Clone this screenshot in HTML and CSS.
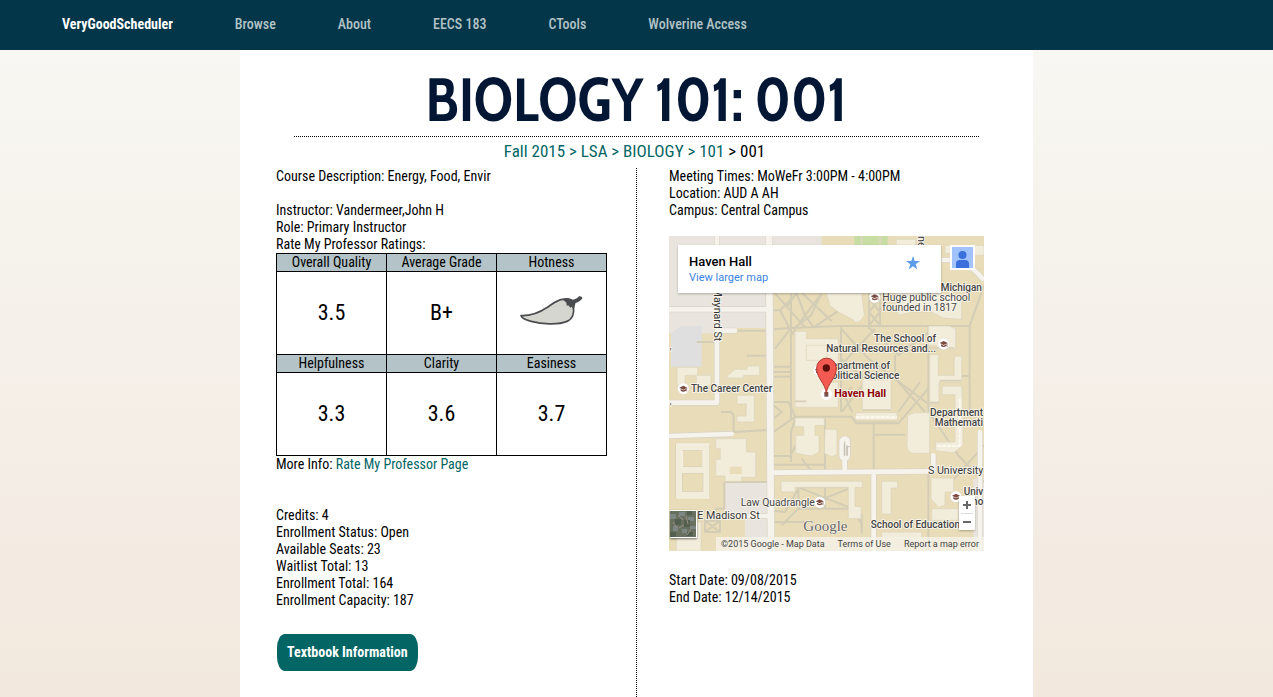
FILE: index.html
```html
<!DOCTYPE html>
<html lang="en">
<head>
<meta charset="utf-8">
<meta name="viewport" content="width=device-width, initial-scale=1">
<title>BIOLOGY 101: 001 - VeryGoodScheduler</title>
<link rel="stylesheet" href="styles.css">
</head>
<body>
<nav class="navbar">
  <a class="brand" href="#">VeryGoodScheduler</a>
  <a href="#">Browse</a>
  <a href="#">About</a>
  <a href="#">EECS 183</a>
  <a href="#">CTools</a>
  <a href="#">Wolverine Access</a>
</nav>

<main class="page">
  <h1 class="title">BIOLOGY 101: 001</h1>
  <div class="crumbs"><a href="#">Fall 2015 &gt;</a> <a href="#">LSA &gt;</a> <a href="#">BIOLOGY &gt;</a> <a href="#">101</a> &gt; 001</div>

  <div class="columns">
    <section class="details">
      <p>Course Description: Energy, Food, Envir</p>
      <div class="instructor">
        <p>Instructor: Vandermeer,John H</p>
        <p>Role: Primary Instructor</p>
        <p>Rate My Professor Ratings:</p>
        <table class="ratings">
          <tr><th>Overall Quality</th><th>Average Grade</th><th>Hotness</th></tr>
          <tr>
            <td>3.5</td>
            <td>B+</td>
            <td>
              <svg class="chili" viewBox="30 30 195 92" role="img" aria-label="Chili pepper">
                <path d="M36 91C62 92 90 82 114 66C132 54 146 42 162 43C176 43 187 51 190 64C195 83 188 101 172 108C146 119 96 116 66 108C48 103 37 98 36 91Z" fill="#d5d6cf" stroke="#4b4c4f" stroke-width="5" stroke-linejoin="round"/>
                <path d="M158 42C168 37 180 39 189 44C197 43 203 39 207 34C212 33 218 35 217 40C212 46 206 51 197 54C195 62 194 69 192 76L187 65L181 68L177 61L171 61L170 53Z" fill="#4b4c4f"/>
              </svg>
            </td>
          </tr>
          <tr><th>Helpfulness</th><th>Clarity</th><th>Easiness</th></tr>
          <tr><td>3.3</td><td>3.6</td><td>3.7</td></tr>
        </table>
        <p>More Info: <a href="#">Rate My Professor Page</a></p>
      </div>
      <div class="enrollment">
        <p>Credits: 4</p>
        <p>Enrollment Status: Open</p>
        <p>Available Seats: 23</p>
        <p>Waitlist Total: 13</p>
        <p>Enrollment Total: 164</p>
        <p>Enrollment Capacity: 187</p>
      </div>
      <button class="textbooks" type="button">Textbook Information</button>
    </section>

    <section class="meeting">
      <p>Meeting Times: MoWeFr 3:00PM - 4:00PM</p>
      <p>Location: AUD A AH</p>
      <p>Campus: Central Campus</p>

      <div class="map">
        <svg class="map-art" viewBox="12 12 945 945" role="img" aria-label="Map of Haven Hall">
          <defs>
            <g id="school">
              <circle r="17" fill="#fff" stroke="#d9d4c6" stroke-width="1"/>
              <path d="M-12-3L0-9L12-3L0 3Z" fill="#7b4a40"/>
              <path d="M-8 1V6Q0 12 8 6V1L0 5Z" fill="#7b4a40"/>
              <path d="M10-2V8" stroke="#7b4a40" stroke-width="2"/>
            </g>
          </defs>
          <rect x="12" y="12" width="945" height="945" fill="#e8dcb9"/>

          <!-- paved and park blocks -->
          <g fill="#e9e4dd">
            <path d="M12 12H148V226H12ZM164 12H302V226H164ZM12 240H148V304H12ZM164 240H302V288H164ZM324 12H470V40H324Z"/>
            <path d="M178 750H310V845H178ZM240 860H310V957H240ZM925 740H957V957H925Z"/>
          </g>
          <path d="M18 304L50 282H110V404H18Z" fill="#dfdfe0"/>
          <path d="M568 12H668V40H568Z" fill="#c7dda4"/>
          <path d="M590 12V40M646 12V40" stroke="#d9d8bd" stroke-width="6"/>

          <!-- walkways -->
          <g fill="none" stroke="#d4cdb6" stroke-width="6" stroke-linejoin="round">
            <path d="M325 292L378 288L520 282H914M378 184V560M378 288L330 350M325 235H345L395 184L420 250L446 286M345 235L372 286M420 250L378 310M395 184L365 225M420 250L470 184M446 286L530 230M412 184L500 268M330 184L420 286M470 184L438 250L390 286"/>
            <path d="M325 404H378M325 420H378M325 434H378M325 510H370L392 556M325 600L392 554H560L574 574H700L790 470M325 672H376L392 640M325 698H480M410 680L438 716M392 554L378 600V690"/>
            <path d="M528 286V540M528 290L610 380L790 516M528 400L630 290M610 286L700 370L790 300M528 380L600 440M528 470L562 540M530 540L600 450M645 184V286M612 184V286M612 200L645 240L612 280M645 200L612 240L645 280"/>
            <path d="M790 286V660M690 370V420M790 432H916M914 282V540M914 282L957 160M780 540L700 450M700 540L765 450M528 500L560 465"/>
            <path d="M626 576V712M630 608H720M480 560V716M325 560L350 540L325 520M400 766V830H562V766H400M400 766L562 830M562 766L400 830M480 766V830M400 770L360 840L325 836M562 830L592 880M400 830L350 880"/>
            <path d="M790 720V957M798 550L880 670L957 750M957 640L850 760M325 870H420M590 846V905"/>
            <path d="M95 330H148M214 296H310M246 371H302M168 540H196Q206 544 206 560V600M206 600L310 594M178 750H310M178 750V830H150M120 866H165V900H120ZM120 866L165 900M165 866L120 900"/>
          </g>

          <!-- buildings -->
          <g fill="#f2ecda" stroke="#ddd5bd" stroke-width="2">
            <path d="M390 298H424V320H520V400H486V450H520V526H390Z"/>
            <path d="M424 340H486V385H424Z"/>
            <path d="M484 184H590L598 250Q580 285 562 262L520 240L496 222Z"/>
            <path d="M690 185L730 150L760 184H830L890 196V262L835 258L800 240H740L700 250Z"/>
            <path d="M840 40H957V70H905V90H880V64H840Z"/>
            <path d="M694 22H752V40H694Z"/>
            <path d="M790 282H852L872 290V352H815V340H790Z"/>
            <path d="M794 368H820V430H868V372H890V450H822V516H794Z"/>
            <path d="M832 462H890L894 540V640L866 662L812 656V630H870V488H832Z"/>
            <path d="M600 430L616 444H668L678 440V534H592V450Z"/>
            <path d="M572 542H696V564H572Z"/>
            <path d="M728 550L750 542H794V664H748Q728 664 726 640Z"/>
            <path d="M186 432L210 412H246V402H284V430H236V438H186Z"/>
            <path d="M216 490H268V570H216V552H244V516H216Z"/>
            <path d="M36 406H98V430H138V455L112 478H94V430H60V460H36Z"/>
            <path d="M152 620H244V660H272V736H230V748H180V732H152V682H166V650H152Z"/>
            <path d="M390 558H478V580H450V610H462V660L440 672L392 664V610H416V584H390Z"/>
            <path d="M480 592H516V668L500 674L478 664Z"/>
            <path d="M650 748H698V768H678V846H650Z"/>
            <path d="M348 748H592V766H570V824H588V860H550V766H390V780H348Z"/>
            <path d="M798 738H866V780H840V820L820 826L798 800Z"/>
            <path d="M34 870H108V957H34ZM650 900H770V918H650ZM800 830H880V865H800Z"/>
          </g>
          <path d="M194 704H230V726H194Z" fill="#e8dcb9"/>
          <g fill="none">
            <path d="M42 646H124V788H42ZM42 714H124" stroke="#d7cfb8" stroke-width="22"/>
            <path d="M42 646H124V788H42ZM42 714H124" stroke="#f2ecda" stroke-width="18"/>
            <path d="M34 636H134M52 656V704M114 656V704M34 798H134" stroke="#fbf8ee" stroke-width="3"/>
            <path d="M572 556H696M816 642H886M884 500V640" stroke="#fcf9f0" stroke-width="6" stroke-dasharray="12 3"/>
            <path d="M794 348H868M390 508H424M594 534H676M824 446H888M794 512H822M572 570H696" stroke="#d6ceb7" stroke-width="5"/>
          </g>

          <!-- streets -->
          <g fill="none" stroke="#d9d3c5" stroke-width="18" stroke-linejoin="round">
            <path d="M156 12V512H12M12 232H310M12 612L200 606M325 722L790 718M626 722V957M156 296H210M805 670V718M945 600V957M200 852H316"/>
            <path d="M312 12L318 957" stroke-width="24"/>
            <path d="M882 88Q925 104 957 145M830 84H885"/>
            <rect x="530" y="620" width="18" height="60" rx="9"/>
            <path d="M539 680V718"/>
          </g>
          <g fill="none" stroke="#f6f3ec" stroke-width="14" stroke-linejoin="round">
            <path d="M156 12V512H12M12 232H310M12 612L200 606M325 722L790 718M626 722V957M156 296H210M805 670V718M945 600V957M200 852H316" stroke-linecap="round"/>
            <path d="M312 12L318 957" stroke-width="20"/>
            <path d="M882 88Q925 104 957 145M830 84H885"/>
            <rect x="530" y="620" width="18" height="60" rx="9"/>
            <path d="M539 680V718"/>
          </g>
          <path d="M538 634V670M546 670V644H554M546 640V672" fill="none" stroke="#bdb8ac" stroke-width="3"/>

          <use href="#school" x="629" y="196"/>
          <use href="#school" x="836" y="336"/>
          <use href="#school" x="55" y="470"/>
          <use href="#school" x="464" y="811"/>
          <use href="#school" x="873" y="794"/>
          <use href="#school" x="461" y="416"/>

          <g class="labels">
            <text x="827" y="176">Michigan</text>
            <text x="652" y="207" class="soft">Huge public school</text>
            <text x="652" y="236" class="soft">founded in 1817</text>
            <text x="813" y="331" text-anchor="end">The School of</text>
            <text x="813" y="361" text-anchor="end">Natural Resources and...</text>
            <text x="675" y="411" text-anchor="end">Department of</text>
            <text x="703" y="441" text-anchor="end">Political Science</text>
            <text x="78" y="479">The Career Center</text>
            <text x="508" y="496" class="place">Haven Hall</text>
            <text x="954" y="552" text-anchor="end">Department</text>
            <text x="954" y="581" text-anchor="end">Mathemati</text>
            <text x="955" y="726" text-anchor="end" class="street">S University</text>
            <text x="227" y="821" class="soft">Law Quadrangle</text>
            <text x="97" y="860" class="street">E Madison St</text>
            <text x="617" y="888">School of Education</text>
            <text x="955" y="789" text-anchor="end">Univ</text>
            <text x="955" y="818" text-anchor="end">ho</text>
            <text transform="translate(147 328) rotate(90)" text-anchor="end" class="street">Maynard St</text>
            <text transform="translate(759 12) rotate(90)" class="street">ne</text>
            <text x="14" y="372" class="soft">'</text>
            <text x="14" y="538" class="soft">'</text>
            <text x="415" y="897" class="logo">Google</text>
          </g>

          <circle cx="484" cy="487" r="17" fill="#fff"/>
          <path d="M478 480H490V494H478Z" fill="#79514c"/>
          <path d="M484 484C482 454 455 440 455 408A29 29 0 0 1 514 408C514 440 487 454 484 484Z" fill="#f35b52" stroke="#b3342d" stroke-width="3"/>
          <circle cx="484" cy="408" r="11" fill="#5b0f0c"/>
        </svg>

        <div class="place-card">
          <div>
            <strong>Haven Hall</strong>
            <a href="#">View larger map</a>
          </div>
          <button type="button" class="star" aria-label="Save place">
            <svg viewBox="0 0 14 14"><path d="M7 0L8.700 5H14L9.700 8.200L11.300 13.500L7 10.300L2.700 13.500L4.300 8.200L0 5H5.300Z" fill="#5b9cec"/></svg>
          </button>
        </div>
        <button type="button" class="avatar" aria-label="Account">
          <svg viewBox="0 0 21 21"><circle cx="10.500" cy="8" r="4" fill="#3a6fdc"/><path d="M4 21V17Q4 13 8 13H13Q17 13 17 17V21Z" fill="#3a6fdc"/></svg>
        </button>
        <button type="button" class="satellite" aria-label="Satellite view">
          <svg viewBox="0 0 26 26">
            <rect width="26" height="26" fill="#68705f"/>
            <path d="M0 3H6V8H0ZM9 1H15V5H9ZM18 6H24V10H18ZM3 15H8V20H3ZM12 18H17V22H12ZM20 15H26V18H20Z" fill="#7c8783"/>
            <path d="M5 8H11V14H5ZM14 9H20V16H14ZM0 21H6V26H0ZM17 21H23V25H17ZM17 0H22V4H17Z" fill="#536050"/>
            <path d="M8 4L13 9M16 5L18 13M9 17L14 14M3 11L7 17M21 18L17 24" stroke="#958f86" stroke-width="1"/>
          </svg>
        </button>
        <div class="zoom">
          <button type="button" aria-label="Zoom in"><svg viewBox="0 0 8 8"><path d="M0 4H8M4 0V8" stroke="#666" stroke-width="2"/></svg></button>
          <button type="button" aria-label="Zoom out"><svg viewBox="0 0 8 8"><path d="M0 4H8" stroke="#666" stroke-width="2"/></svg></button>
        </div>
        <div class="attribution">
          <span>©2015 Google - Map Data</span>
          <a href="#">Terms of Use</a>
          <a href="#">Report a map error</a>
        </div>
      </div>

      <p>Start Date: 09/08/2015</p>
      <p>End Date: 12/14/2015</p>
    </section>
  </div>
</main>
</body>
</html>
```
FILE: styles.css
```css
* { box-sizing: border-box; }

body {
  margin: 0;
  min-height: 100vh;
  display: flex;
  flex-direction: column;
  background: linear-gradient(#f8f8f4, #f2e8de);
  color: #000;
  font: 14px/17px "Roboto Condensed", Roboto, sans-serif;
}

a { color: #036564; text-decoration: none; }
p { margin: 0; }
button { font: inherit; border: 0; padding: 0; cursor: pointer; }
svg { display: block; }

.navbar {
  display: flex;
  flex-wrap: wrap;
  align-items: center;
  column-gap: 62px;
  min-height: 50px;
  padding: 0 62px 2px;
  background: #033649;
}
.navbar a { color: #b3c3c7; font-weight: 500; }
.navbar .brand { color: #fff; font-weight: 700; }

.page {
  flex: 1;
  display: flex;
  flex-direction: column;
  width: 100%;
  max-width: 793px;
  margin: 0 auto;
  padding: 0 36px;
  background: #fff;
}

.title {
  margin: 0 18px;
  padding: 14px 0 0;
  border-bottom: 1px dotted #000;
  color: #031634;
  font: 700 60px/72px "Cabin Condensed", Cabin, sans-serif;
  text-align: center;
}

.crumbs {
  padding: 4px 4px 7px 0;
  font-size: 17px;
  line-height: 20px;
  text-align: center;
}

.columns {
  flex: 1;
  display: grid;
  grid-template-columns: 360px minmax(0, 1fr);
}
.details { padding-bottom: 26px; }
.instructor { margin: 17px 0 34px; }

.ratings { border-collapse: collapse; table-layout: fixed; width: 331px; }
.ratings th,
.ratings td { border: 1px solid #000; padding: 0; text-align: center; }
.ratings th { background: #b3c3c7; font-weight: 400; }
.ratings td { height: 83px; padding-bottom: 2px; font-size: 22px; }
.chili { width: 66px; margin: 0 auto 2px; }

.textbooks {
  margin: 25px 1px 0;
  padding: 10px;
  border-radius: 8px / 14px;
  background: #036564;
  color: #fff;
  font-weight: 700;
}

.meeting { padding-left: 32px; border-left: 1px dotted #000; }

.map {
  position: relative;
  max-width: 315px;
  margin: 17px 0 21px;
  overflow: hidden;
  font-family: Roboto, sans-serif;
}
.map-art { width: 100%; }

.labels text {
  font-size: 30px;
  font-weight: 500;
  fill: #444;
  stroke: #fbf8ef;
  stroke-width: 5px;
  paint-order: stroke;
}
.labels .soft { font-size: 31px; font-weight: 400; }
.labels .street { font-size: 32px; font-weight: 400; fill: #333; }
.labels .place { font-size: 32px; fill: #8b0000; font-weight: 700; }
.labels .logo { font: 45px "Liberation Serif", serif; fill: #666; stroke-width: 3px; }

.place-card {
  position: absolute;
  top: 9px;
  left: 9px;
  display: flex;
  justify-content: space-between;
  width: 263px;
  padding: 9px 21px 7px 11px;
  background: #fff;
  box-shadow: 0 1px 2px #0004;
  font-size: 11px;
  line-height: 16px;
}
.place-card strong { display: block; font-size: 13px; font-weight: 500; }
.place-card a { color: #3a84df; }
.star { align-self: flex-start; margin-top: 2px; background: none; }
.star svg { width: 14px; }

.avatar {
  position: absolute;
  top: 9px;
  right: 9px;
  border: 2px solid #fff;
  background: #a1c2fa;
}
.avatar svg { width: 21px; }

.satellite {
  position: absolute;
  bottom: 13px;
  left: 1px;
  border: 1px solid #fff;
  border-left: 0;
  box-shadow: 0 1px 2px #0008;
}
.satellite svg { width: 26px; }

.zoom {
  position: absolute;
  right: 9px;
  bottom: 21px;
  display: grid;
  width: 16px;
  padding: 0 2px;
  background: #fff;
  box-shadow: 0 1px 2px #0004;
}
.zoom button { display: grid; place-items: center; height: 17px; background: none; }
.zoom button + button { border-top: 1px solid #ddd; }
.zoom svg { width: 8px; }

.attribution {
  position: absolute;
  right: 0;
  bottom: 0;
  display: flex;
  gap: 13px;
  padding: 0 5px;
  background: #f5f2eacc;
  color: #444;
  font-size: 9px;
  line-height: 14px;
  white-space: nowrap;
}
.attribution a { color: inherit; }

@media (max-width: 760px) {
  .columns { grid-template-columns: minmax(0, 1fr); row-gap: 20px; }
  .meeting { padding-left: 0; border-left: 0; }
  .title { font-size: 40px; line-height: 52px; }
}
```
